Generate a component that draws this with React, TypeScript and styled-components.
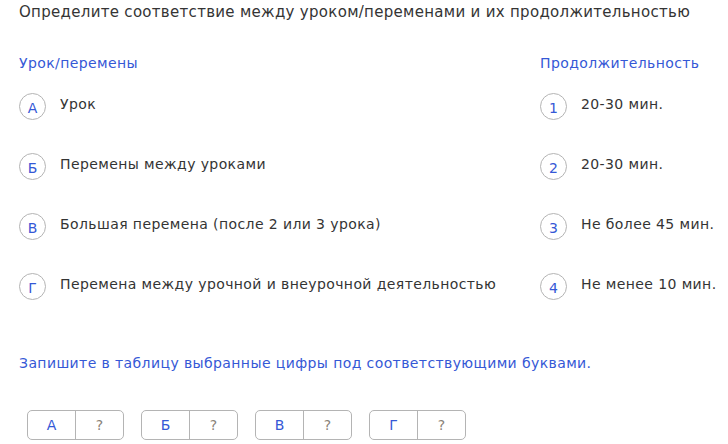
import styled, { createGlobalStyle } from "styled-components";

const GlobalStyle = createGlobalStyle`
  body {
    margin: 0;
    background: #ffffff;
    font-family: "DejaVu Sans", "Noto Sans", Arial, sans-serif;
    color: #333333;
  }
`;

const COLORS = {
  ink: "#343434",
  blue: "#3558d6",
  border: "#b4b4b4",
  muted: "#8a8378",
};

const Page = styled.div`
  width: 728px;
  padding: 0 0 0 19px;
  box-sizing: border-box;
  letter-spacing: 0.4px;
`;

const Title = styled.div`
  font-size: 15px;
  line-height: 24px;
  letter-spacing: 0.3px;
  color: ${COLORS.ink};
  white-space: nowrap;
`;

const Columns = styled.div`
  display: flex;
  margin-top: 29px;
`;

const Column = styled.div<{ $width?: number }>`
  display: flex;
  flex-direction: column;
  gap: 33px;
  ${(p) => (p.$width ? `width: ${p.$width}px;` : "flex: 1;")}
`;

const ColumnHead = styled.div`
  font-size: 14px;
  line-height: 20px;
  color: ${COLORS.blue};
  margin-bottom: -13px;
`;

const Item = styled.div`
  display: flex;
  align-items: flex-start;
  gap: 14px;
`;

const Marker = styled.div`
  width: 27px;
  height: 27px;
  flex: none;
  box-sizing: border-box;
  border: 1px solid ${COLORS.border};
  border-radius: 50%;
  display: flex;
  align-items: center;
  justify-content: center;
  font-size: 14px;
  letter-spacing: 0;
  color: ${COLORS.blue};
  padding-top: 2px;
`;

const ItemText = styled.div`
  font-size: 14px;
  line-height: 20px;
  padding-top: 1px;
  color: ${COLORS.ink};
  white-space: nowrap;
`;

const Instruction = styled.div`
  margin-top: 53px;
  font-size: 14px;
  line-height: 20px;
  color: ${COLORS.blue};
`;

const Answers = styled.div`
  display: flex;
  gap: 17px;
  margin-top: 37px;
  padding-left: 8px;
`;

const AnswerBox = styled.div`
  display: flex;
  width: 97px;
  height: 30px;
  box-sizing: border-box;
  border: 1px solid ${COLORS.border};
  border-radius: 5px;
`;

const Cell = styled.div<{ $muted?: boolean }>`
  flex: 1;
  display: flex;
  align-items: center;
  justify-content: center;
  font-size: 14px;
  letter-spacing: 0;
  color: ${(p) => (p.$muted ? COLORS.muted : COLORS.blue)};

  & + & {
    border-left: 1px solid ${COLORS.border};
  }
`;

const lessons = [
  { key: "А", text: "Урок" },
  { key: "Б", text: "Перемены между уроками" },
  { key: "В", text: "Большая перемена (после 2 или 3 урока)" },
  { key: "Г", text: "Перемена между урочной и внеурочной деятельностью" },
];

const durations = [
  { key: "1", text: "20-30 мин." },
  { key: "2", text: "20-30 мин." },
  { key: "3", text: "Не более 45 мин." },
  { key: "4", text: "Не менее 10 мин." },
];

export default function App() {
  return (
    <Page>
      <GlobalStyle />
      <Title>
        Определите соответствие между уроком/переменами и их продолжительностью
      </Title>

      <Columns>
        <Column>
          <ColumnHead>Урок/перемены</ColumnHead>
          {lessons.map((l) => (
            <Item key={l.key}>
              <Marker>{l.key}</Marker>
              <ItemText>{l.text}</ItemText>
            </Item>
          ))}
        </Column>
        <Column $width={188}>
          <ColumnHead>Продолжительность</ColumnHead>
          {durations.map((d) => (
            <Item key={d.key}>
              <Marker>{d.key}</Marker>
              <ItemText>{d.text}</ItemText>
            </Item>
          ))}
        </Column>
      </Columns>

      <Instruction>
        Запишите в таблицу выбранные цифры под соответствующими буквами.
      </Instruction>

      <Answers>
        {lessons.map((l) => (
          <AnswerBox key={l.key}>
            <Cell>{l.key}</Cell>
            <Cell $muted>?</Cell>
          </AnswerBox>
        ))}
      </Answers>
    </Page>
  );
}
